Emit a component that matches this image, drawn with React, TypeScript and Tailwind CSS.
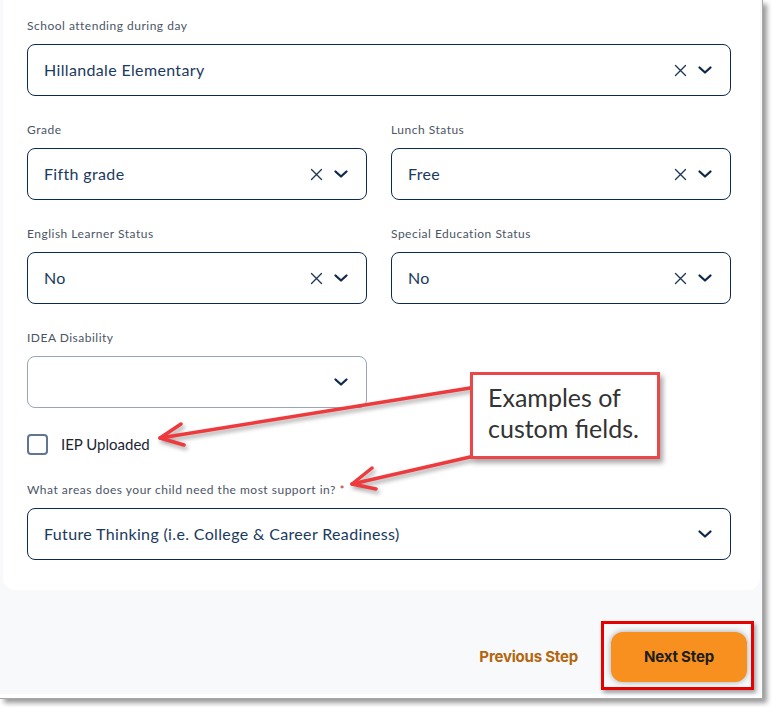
const fieldFont = { fontFamily: 'Lato, "Open Sans", sans-serif' };

function XIcon() {
  return (
    <svg width="13" height="13" viewBox="0 0 13 13" fill="none" stroke="#1b3556" strokeWidth="1.3" strokeLinecap="round">
      <path d="M1.5 1.5 11.5 11.5M11.5 1.5 1.5 11.5" />
    </svg>
  );
}

function Chevron() {
  return (
    <svg width="16" height="10" viewBox="0 0 16 10" fill="none" stroke="#0f2a4a" strokeWidth="2.3" strokeLinecap="round" strokeLinejoin="round">
      <path d="M2.5 2.5l5.5 5 5.5-5" />
    </svg>
  );
}

function SelectBox({ value, clearable = true, empty = false }: { value?: string; clearable?: boolean; empty?: boolean }) {
  return (
    <div
      className={`h-[52px] rounded-lg border bg-white flex items-center pl-4 pr-[17px] ${
        empty ? 'border-[#98a6b8]' : 'border-[#0d2b4e]'
      }`}
    >
      <span className="flex-1 text-[16px] text-[#1a3a5e] tracking-[0.35px]">{value}</span>
      {clearable && (
        <span className="mr-[10px] flex items-center">
          <XIcon />
        </span>
      )}
      <Chevron />
    </div>
  );
}

function Field({ label, children, required = false }: { label: string; children: React.ReactNode; required?: boolean }) {
  return (
    <div className="flex flex-col">
      <div className="h-4 leading-4 text-[12px] text-[#4b5565] tracking-[0.5px] mb-[10px]">
        {label}
        {required && <span className="text-[#b01c1c] text-[11px] align-top ml-1">*</span>}
      </div>
      {children}
    </div>
  );
}

export default function App() {
  return (
    <div className="relative w-[772px] h-[707px] bg-white overflow-hidden">
      <div className="w-[763px] h-[699px] bg-white border-r border-b border-[#a8a8a8] shadow-[4px_4px_5px_rgba(0,0,0,0.4)]">
        <div className="h-[694px] bg-[#f8f9fb] flex flex-col">
          <div
            className="ml-[3px] mr-[2px] bg-white rounded-b-xl pt-[18px] pl-[24px] pr-[29px] pb-[30px] flex flex-col gap-[26px]"
            style={fieldFont}
          >
            <Field label="School attending during day">
              <SelectBox value="Hillandale Elementary" />
            </Field>
            <div className="grid grid-cols-2 gap-6">
              <Field label="Grade">
                <SelectBox value="Fifth grade" />
              </Field>
              <Field label="Lunch Status">
                <SelectBox value="Free" />
              </Field>
            </div>
            <div className="grid grid-cols-2 gap-6">
              <Field label="English Learner Status">
                <SelectBox value="No" />
              </Field>
              <Field label="Special Education Status">
                <SelectBox value="No" />
              </Field>
            </div>
            <div className="grid grid-cols-2 gap-6">
              <Field label="IDEA Disability">
                <SelectBox clearable={false} empty />
              </Field>
            </div>
            <label className="flex items-center gap-[13px] h-[22px] -mt-[1px] mb-[1px]">
              <span className="w-[21px] h-[21px] rounded-[4px] border-2 border-[#5f7590] bg-white" />
              <span className="text-[15px] text-[#1c2533]">IEP Uploaded</span>
            </label>
            <Field label="What areas does your child need the most support in?" required>
              <SelectBox value="Future Thinking (i.e. College & Career Readiness)" clearable={false} />
            </Field>
          </div>
          <div className="flex-1 flex items-start justify-end pt-[42px] pr-[15px]" style={{ fontFamily: 'Inter, Roboto, sans-serif' }}>
            <button className="h-[50px] px-0 mr-[33px] text-[15px] font-bold text-[#b3660b] tracking-[-0.2px]">Previous Step</button>
            <button className="w-[136px] h-[50px] rounded-xl bg-[#f7901e] text-[15px] font-bold text-[#1d1d1d] tracking-[-0.2px] shadow-[0_0_6px_rgba(0,0,0,0.35)]">
              Next Step
            </button>
          </div>
        </div>
      </div>

      {/* annotations */}
      <svg className="absolute inset-0 pointer-events-none" width="772" height="707" style={{ filter: 'drop-shadow(2px 3px 2px rgba(0,0,0,0.35))' }}>
        <g stroke="#ee3a3d" strokeWidth="3.5" strokeLinecap="round" strokeLinejoin="round" fill="none">
          <path d="M470 388 L160 438" />
          <path d="M181 424 L160 438 L184 445" />
          <path d="M470 457 L352 484" />
          <path d="M372 468 L352 484 L376 489" />
        </g>
      </svg>
      <div className="absolute left-[470px] top-[372px] w-[190px] h-[87px] bg-white border-[3px] border-[#e9474a] shadow-[3px_4px_5px_rgba(0,0,0,0.35)] pl-[15px] pt-[7px]">
        <div className="text-[25px] leading-[31px] text-[#333]" style={{ fontFamily: 'Lato, "Open Sans", sans-serif' }}>
          Examples of
          <br />
          custom fields.
        </div>
      </div>
      <div className="absolute left-[601px] top-[621px] w-[153px] h-[69px] border-[3px] border-[#e60000] shadow-[2px_3px_4px_rgba(0,0,0,0.35)]" />
    </div>
  );
}
